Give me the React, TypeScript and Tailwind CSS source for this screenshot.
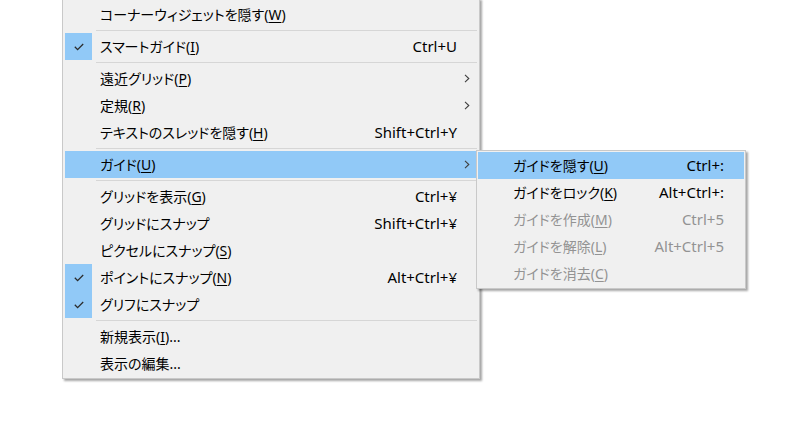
import React from "react";

type Item =
  | { sep: true }
  | {
      sep?: false;
      label: string;
      acc?: string;
      suffix?: string;
      shortcut?: string;
      checked?: boolean;
      arrow?: boolean;
      highlight?: boolean;
      disabled?: boolean;
    };

const mainItems: Item[] = [
  { label: "コーナーウィジェットを隠す", acc: "W" },
  { sep: true },
  { label: "スマートガイド", acc: "I", checked: true, shortcut: "Ctrl+U" },
  { sep: true },
  { label: "遠近グリッド", acc: "P", arrow: true },
  { label: "定規", acc: "R", arrow: true },
  { label: "テキストのスレッドを隠す", acc: "H", shortcut: "Shift+Ctrl+Y" },
  { sep: true },
  { label: "ガイド", acc: "U", arrow: true, highlight: true },
  { sep: true },
  { label: "グリッドを表示", acc: "G", shortcut: "Ctrl+¥" },
  { label: "グリッドにスナップ", shortcut: "Shift+Ctrl+¥" },
  { label: "ピクセルにスナップ", acc: "S" },
  { label: "ポイントにスナップ", acc: "N", checked: true, shortcut: "Alt+Ctrl+¥" },
  { label: "グリフにスナップ", checked: true },
  { sep: true },
  { label: "新規表示", acc: "I", suffix: "..." },
  { label: "表示の編集...", },
];

const subItems: Item[] = [
  { label: "ガイドを隠す", acc: "U", shortcut: "Ctrl+:", highlight: true },
  { label: "ガイドをロック", acc: "K", shortcut: "Alt+Ctrl+:" },
  { label: "ガイドを作成", acc: "M", shortcut: "Ctrl+5", disabled: true },
  { label: "ガイドを解除", acc: "L", shortcut: "Alt+Ctrl+5", disabled: true },
  { label: "ガイドを消去", acc: "C", disabled: true },
];

function Check() {
  return (
    <svg width="10" height="8" viewBox="0 0 10 8" fill="none">
      <path d="M0.8 3.8 L3.6 6.6 L9.2 1" stroke="#2b2b2b" strokeWidth="1.3" />
    </svg>
  );
}

function Arrow() {
  return (
    <svg width="6" height="9" viewBox="0 0 6 9" fill="none">
      <path d="M1 0.8 L4.8 4.5 L1 8.2" stroke="#404040" strokeWidth="1.1" />
    </svg>
  );
}

function Row({ item }: { item: Item }) {
  if (item.sep) {
    return (
      <div className="h-[5px] flex items-center pl-[31px]">
        <div className="h-px w-full bg-[#d6d6d6]" />
      </div>
    );
  }
  const color = item.disabled ? "text-[#939393]" : "text-black";
  return (
    <div
      className={`h-[27px] flex items-center ${item.highlight ? "bg-[#91c9f7]" : ""} ${color}`}
    >
      <div
        className={`w-[27px] h-[27px] shrink-0 flex items-center justify-center ${
          item.checked ? "bg-[#91c9f7]" : ""
        }`}
      >
        {item.checked ? <Check /> : null}
      </div>
      <div className="ml-[8px] flex-1 whitespace-nowrap text-[14px] [font-feature-settings:'palt'] leading-none">
        {item.label}
        {item.acc ? (
          <>
            (<span className="underline underline-offset-[2px] decoration-1">{item.acc}</span>)
          </>
        ) : null}
        {item.suffix ?? ""}
      </div>
      <div className="whitespace-nowrap text-[15px] leading-none">{item.shortcut ?? ""}</div>
      <div className="w-[20px] shrink-0 flex items-center justify-center">
        {item.arrow ? <Arrow /> : null}
      </div>
    </div>
  );
}

export default function App() {
  return (
    <div
      className="relative w-[800px] h-[422px] bg-white overflow-hidden"
      style={{ fontFamily: '"Noto Sans", "Noto Sans CJK JP", sans-serif' }}
    >
      <div className="ml-[62px] mt-[-2px] w-[418px] bg-[#f0f0f0] border border-[#c9c9c9] pt-[2px] pb-[1px] px-[2px] shadow-[2px_2px_2px_rgba(0,0,0,0.35)]">
        {mainItems.map((it, i) => (
          <Row key={i} item={it} />
        ))}
      </div>
      <div className="absolute left-[476px] top-[150px] w-[270px] bg-[#f0f0f0] border border-[#c9c9c9] py-[1px] px-[1px] shadow-[2px_2px_2px_rgba(0,0,0,0.35)]">
        {subItems.map((it, i) => (
          <Row key={i} item={it} />
        ))}
      </div>
    </div>
  );
}
